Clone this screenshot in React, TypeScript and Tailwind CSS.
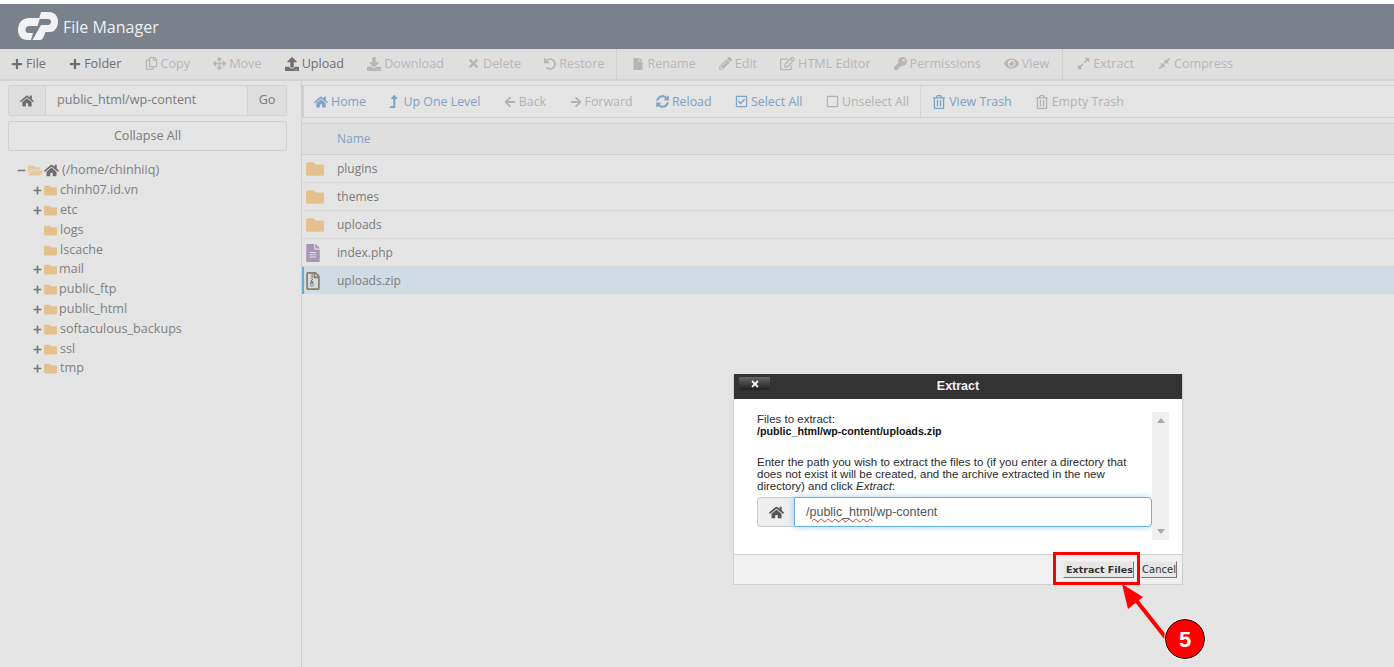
import type { ReactNode } from 'react'
import {
  FaPlus, FaRegCopy, FaArrowsAlt, FaUpload, FaDownload, FaTimes, FaUndo, FaFile, FaPencilAlt, FaRegEdit, FaKey, FaEye,
  FaExpandAlt, FaCompressAlt, FaHome, FaLevelUpAlt, FaArrowLeft, FaArrowRight, FaSyncAlt, FaRegCheckSquare,
  FaRegSquare, FaRegTrashAlt, FaFolder, FaFolderOpen, FaFileAlt, FaRegFileArchive, FaMinus,
} from 'react-icons/fa'

function Tool({ icon, label, className }: { icon: ReactNode; label: string; className: string }) {
  return (
    <div className={`flex items-center gap-[3px] whitespace-nowrap ${className}`}>
      {icon}
      <span>{label}</span>
    </div>
  )
}

const off = 'text-[#b6b6b6]'
const on = 'text-[#6f6f6f]'
const link = 'text-[#7fa2c6]'
const navOff = 'text-[#b2b2b2]'

const tree = [
  { name: 'chinh07.id.vn', plus: true, gap: 'ml-[3px]' },
  { name: 'etc', plus: true, gap: 'ml-[3px]' },
  { name: 'logs', plus: false, gap: 'ml-[3px]' },
  { name: 'lscache', plus: false, gap: 'ml-[3px]' },
  { name: 'mail', plus: true, gap: 'ml-[2px]' },
  { name: 'public_ftp', plus: true, gap: 'ml-[2px]' },
  { name: 'public_html', plus: true, gap: 'ml-[2px]' },
  { name: 'softaculous_backups', plus: true, gap: 'ml-[3px]' },
  { name: 'ssl', plus: true, gap: 'ml-[3px]' },
  { name: 'tmp', plus: true, gap: 'ml-[3px]' },
]

const files = [
  { name: 'plugins', icon: <FaFolder className="text-[18px] text-[#e3c08c]" /> },
  { name: 'themes', icon: <FaFolder className="text-[18px] text-[#e3c08c]" /> },
  { name: 'uploads', icon: <FaFolder className="text-[18px] text-[#e3c08c]" /> },
  { name: 'index.php', icon: <FaFileAlt className="ml-[-2px] text-[18px] text-[#a995b8]" /> },
]

export default function App() {
  return (
    <div className="relative flex h-[667px] w-[1394px] flex-col overflow-hidden bg-[#e4e4e4] font-['Open_Sans',sans-serif] text-[12.6px]">
      <div className="h-[4px] bg-white" />
      <header className="flex h-[45px] items-center bg-[#7a818b] pl-[18px]">
        <svg width="40" height="28" viewBox="0 0 40 28" className="mt-[-1px]" fill="#f2f2f2">
          <path d="M22 6 H11 C4 6 0 11 0 18 C0 24 4 28 9 28 H13 L15 21 H10.5 C8.5 21 7.5 20 7.5 18 C7.5 15.5 9 14 11 14 H19.5 Z" />
          <path d="M14.5 28 H22 Q24.5 28 25.5 25 L27.5 20 H32 C37 20 40 15 40 9.5 C40 3.5 36 0 31 0 H23 L21 7 H30 C32 7 33 8 33 9.5 C33 11.5 32 13 30 13 H23 Z" />
        </svg>
        <span className="ml-[5px] text-[16px] text-[#f0f0f0]">File Manager</span>
      </header>

      <div className="flex h-[32px] items-center border-b-2 border-[#d3d3d3] bg-[#dfdfdf] pl-[11px]">
        <div className="flex items-center gap-[23.2px]">
          <Tool className={on} icon={<FaPlus className="text-[12px]" />} label="File" />
          <Tool className={on} icon={<FaPlus className="text-[12px]" />} label="Folder" />
          <Tool className={off} icon={<FaRegCopy className="text-[13px]" />} label="Copy" />
          <Tool className={off} icon={<FaArrowsAlt className="text-[13px]" />} label="Move" />
          <Tool className={on} icon={<FaUpload className="text-[14px]" />} label="Upload" />
          <Tool className={off} icon={<FaDownload className="text-[14px]" />} label="Download" />
          <Tool className={off} icon={<FaTimes className="text-[13px]" />} label="Delete" />
          <Tool className={off} icon={<FaUndo className="text-[12px]" />} label="Restore" />
        </div>
        <div className="ml-[12px] h-full border-l border-dotted border-[#c8c8c8]" />
        <div className="ml-[15px] flex items-center gap-[23px]">
          <Tool className={off} icon={<FaFile className="text-[12px]" />} label="Rename" />
          <Tool className={off} icon={<FaPencilAlt className="text-[13px]" />} label="Edit" />
          <Tool className={off} icon={<FaRegEdit className="text-[15px]" />} label="HTML Editor" />
          <Tool className={off} icon={<FaKey className="text-[13px]" />} label="Permissions" />
          <Tool className={off} icon={<FaEye className="text-[15px]" />} label="View" />
        </div>
        <div className="ml-[13px] h-full border-l border-dotted border-[#c8c8c8]" />
        <div className="ml-[14px] flex items-center gap-[24px]">
          <Tool className={off} icon={<FaExpandAlt className="text-[13px]" />} label="Extract" />
          <Tool className={off} icon={<FaCompressAlt className="text-[13px]" />} label="Compress" />
        </div>
      </div>

      <div className="flex min-h-0 flex-1">
        <aside className="w-[302px] shrink-0 border-r border-[#cfcfcf] px-[8px] pt-[4px]">
          <div className="flex h-[31px] w-[279px] items-stretch rounded-[2px] border border-[#d2d2d2] text-[#7b7b7b]">
            <div className="flex w-[37px] items-center justify-center border-r border-[#d2d2d2] bg-[#dedede] text-[#6f6f6f]">
              <FaHome className="text-[14px]" />
            </div>
            <div className="flex flex-1 items-center pl-[11px]">public_html/wp-content</div>
            <div className="flex w-[39px] items-center justify-center border-l border-[#d2d2d2] bg-[#dedede]">Go</div>
          </div>
          <div className="mt-[5px] flex h-[30px] w-[279px] items-center justify-center rounded-[2px] border border-[#cfcfcf] text-[#7b7b7b]">
            Collapse All
          </div>
          <div className="mt-[10px] text-[#808080]">
            <div className="flex h-[19.8px] items-center pl-[9px]">
              <FaMinus className="text-[9px] text-[#777]" />
              <FaFolderOpen className="ml-[2px] text-[15px] text-[#e8c99b]" />
              <FaHome className="ml-[1px] text-[15px] text-[#6f6f6f]" />
              <span className="ml-[3px]">(/home/chinhiiq)</span>
            </div>
            {tree.map((t) => (
              <div key={t.name} className="flex h-[19.8px] items-center pl-[25px]">
                <span className="flex w-[11px] items-center">{t.plus && <FaPlus className="text-[9px] text-[#777]" />}</span>
                <FaFolder className="text-[13px] text-[#e3c08c]" />
                <span className={t.gap}>{t.name}</span>
              </div>
            ))}
          </div>
        </aside>

        <main className="min-w-0 flex-1">
          <div className="mt-[4px] flex h-[33px] items-center border-y border-l-2 border-[#d0d0d0] pl-[10px] text-[12.4px]">
            <div className="flex items-center gap-[23.4px] pt-[1px]">
              <Tool className={link} icon={<FaHome className="text-[14px]" />} label="Home" />
              <Tool className={link} icon={<FaLevelUpAlt className="ml-[-2px] text-[13px]" />} label="Up One Level" />
              <Tool className={navOff} icon={<FaArrowLeft className="text-[12px]" />} label="Back" />
              <Tool className={navOff} icon={<FaArrowRight className="text-[12px]" />} label="Forward" />
              <Tool className={link} icon={<FaSyncAlt className="text-[13px]" />} label="Reload" />
              <Tool className={link} icon={<FaRegCheckSquare className="text-[13px]" />} label="Select All" />
              <Tool className={navOff} icon={<FaRegSquare className="text-[13px]" />} label="Unselect All" />
            </div>
            <div className="ml-[11px] h-full border-l border-dotted border-[#c8c8c8]" />
            <div className="ml-[11px] flex items-center gap-[23px] pt-[1px]">
              <Tool className={link} icon={<FaRegTrashAlt className="text-[14px]" />} label="View Trash" />
              <Tool className={navOff} icon={<FaRegTrashAlt className="text-[14px]" />} label="Empty Trash" />
            </div>
          </div>

          <div className="mt-[5px] flex h-[32px] items-center border-y border-[#d0d0d0] bg-[#dfdfdf] pl-[35px] text-[12px] text-[#7fa2c6]">
            Name
          </div>
          {files.map((f) => (
            <div key={f.name} className="flex h-[28px] items-center border-b border-[#d6d6d6] pl-[4px] text-[12px] text-[#7b7b7b]">
              <span className="flex w-[31px] items-center">{f.icon}</span>
              {f.name}
            </div>
          ))}
          <div className="flex h-[27px] items-center border-l-2 border-[#5cb0d6] bg-[#d0dce4] pl-[2px] text-[12px] text-[#7b7b7b]">
            <span className="flex w-[31px] items-center">
              <FaRegFileArchive className="ml-[-2px] text-[18px] text-[#8f7a66]" />
            </span>
            uploads.zip
          </div>
        </main>
      </div>

      {/* extract dialog */}
      <div className="absolute top-[374px] left-[733px] flex h-[211px] w-[450px] flex-col border border-t-0 border-[#cfcfcf] bg-white font-['Liberation_Sans',sans-serif] text-[11.5px] leading-[12px] text-[#2a2a2a]">
        <div className="relative flex h-[25px] shrink-0 items-center justify-center bg-[#333] pb-[2px] text-[12.5px] font-bold text-[#f4f4f4]">
          Extract
          <div className="absolute top-[3px] left-[5px] flex h-[13px] w-[31px] items-center justify-center rounded-b-[2px] bg-gradient-to-b from-[#666] to-[#222] text-white">
            <FaTimes className="text-[10px]" />
          </div>
        </div>
        <div className="flex flex-1 pt-[13px] pl-[23px]">
          <div className="w-[395px]">
            <div className="pt-[1px]">Files to extract:</div>
            <div className="text-[10.7px] font-bold text-[#111]">/public_html/wp-content/uploads.zip</div>
            <div className="mt-[19px] w-[380px]">
              Enter the path you wish to extract the files to (if you enter a directory that does not exist it will be created, and the archive extracted in the new directory) and click <em>Extract</em>:
            </div>
            <div className="mt-[5px] flex h-[30px]">
              <div className="flex w-[37px] items-center justify-center rounded-l-[4px] border border-r-0 border-[#ccc] bg-[#eee] text-[#555]">
                <FaHome className="text-[15px]" />
              </div>
              <div className="flex flex-1 items-center rounded-r-[4px] border border-[#66afe9] pl-[11px] text-[12.5px] text-[#555] shadow-[0_0_6px_rgba(102,175,233,0.6)]">
                /<span className="underline decoration-[#e03030] decoration-wavy decoration-1 underline-offset-2">public_html</span>/wp-content
              </div>
            </div>
          </div>
          <div className="flex h-[128px] w-[17px] flex-col items-center justify-between bg-[#efefef] py-[6px]">
            <span className="h-0 w-0 border-x-[4px] border-b-[5px] border-x-transparent border-b-[#aaa]" />
            <span className="h-0 w-0 border-x-[4px] border-t-[5px] border-x-transparent border-t-[#aaa]" />
          </div>
        </div>
        <div className="flex h-[30px] shrink-0 items-center justify-end gap-[7px] border-t border-[#cfcfcf] bg-[#f0f0f0] pr-[5px] font-['DejaVu_Sans',sans-serif] text-[9.5px] text-[#333]">
          <div className="flex h-[17px] w-[71px] items-center justify-center whitespace-nowrap border border-t-[#eee] border-r-[#777] border-b-[#777] border-l-[#eee] bg-[#e6e6e6] pl-[2px] font-bold">Extract Files</div>
          <div className="flex h-[17px] w-[36px] items-center justify-center border border-t-[#eee] border-r-[#777] border-b-[#777] border-l-[#eee] bg-[#e6e6e6] text-[10px]">Cancel</div>
        </div>
      </div>

      {/* annotation */}
      <div className="absolute top-[552px] left-[1053px] h-[33px] w-[87px] border-[3px] border-[#f00]" />
      <svg className="absolute top-[580px] left-[1110px]" width="100" height="85" viewBox="0 0 100 85">
        <path d="M56 58 L22 15" stroke="#f00" strokeWidth="4" fill="none" />
        <path d="M12 4 L33 17 L18 29 Z" fill="#f00" />
        <circle cx="75" cy="59" r="19.5" fill="#f00" stroke="#000" strokeWidth="1" />
        <circle cx="75" cy="59" r="20.5" fill="none" stroke="#fff" strokeWidth="0.8" />
      </svg>
      <div className="absolute top-[626px] left-[1165px] flex h-[26px] w-[40px] items-center justify-center font-['Liberation_Sans',sans-serif] text-[22px] font-bold text-white">5</div>
    </div>
  )
}
